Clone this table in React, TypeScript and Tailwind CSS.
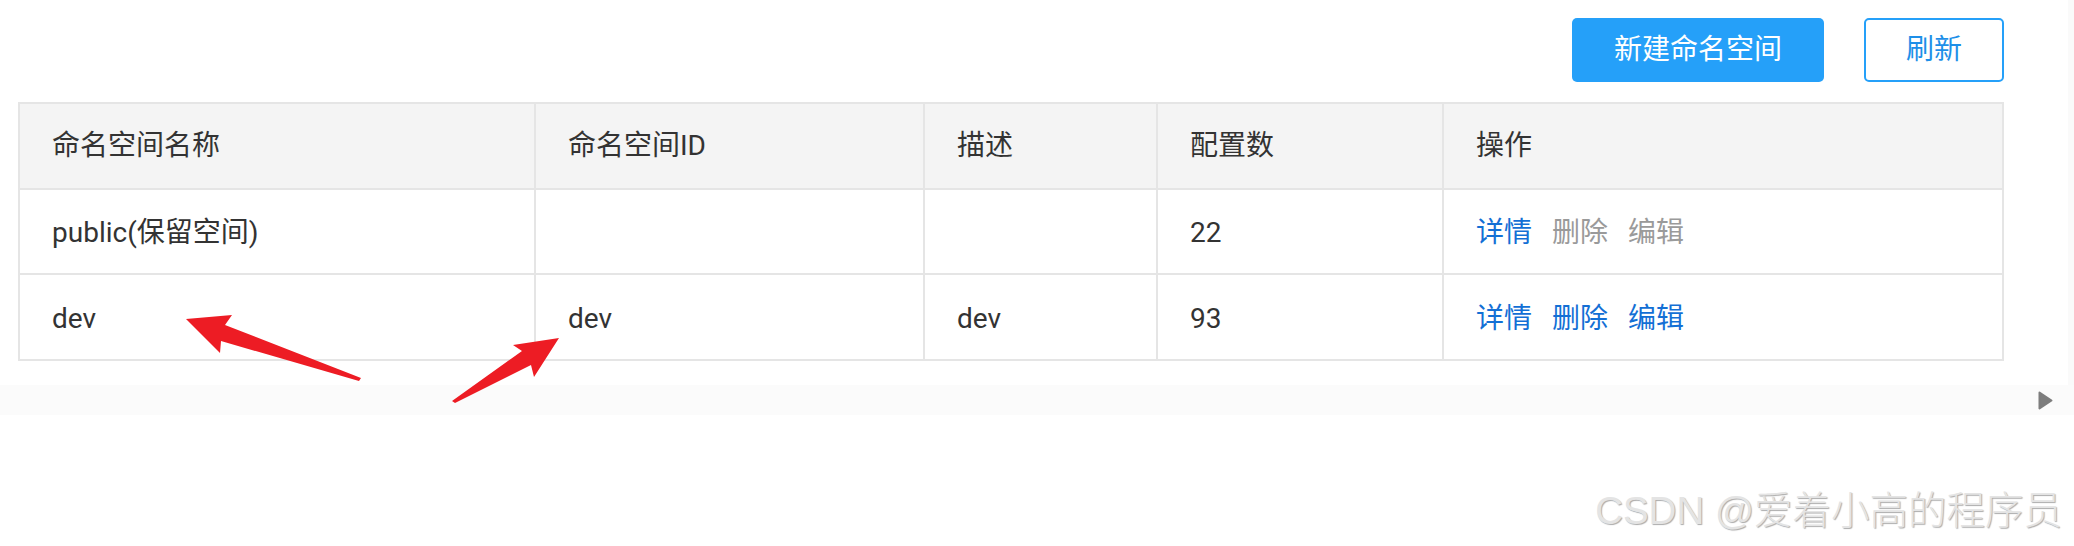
const rows = [
  { name: 'public(保留空间)', id: '', desc: '', count: '22', locked: true },
  { name: 'dev', id: 'dev', desc: 'dev', count: '93', locked: false },
];

const cols = 'grid grid-cols-[514px_389px_233px_286px_560px]';
const cell = 'flex items-center pl-[32px] border-[#e5e5e5]';
const bodyCell = `${cell} pt-[3px]`;

export default function App() {
  return (
    <div className="relative h-[546px] w-full overflow-hidden bg-white font-['Roboto','Noto_Sans_CJK_SC',sans-serif] text-[28px] text-[#333]">
      <div className="flex h-[385px]">
        <div className="flex-1 pl-[18px] pr-[64px]">
          {/* toolbar */}
          <div className="flex justify-end gap-[40px] pt-[18px]">
            <button className="h-[64px] w-[252px] rounded-[5px] bg-[#25a0f9] text-white">新建命名空间</button>
            <button className="h-[64px] w-[140px] rounded-[5px] border-2 border-[#25a0f9] bg-white text-[#1d8fe8]">刷新</button>
          </div>

          {/* namespace table */}
          <div className="mt-[20px] border-2 border-[#e5e5e5]">
            <div className={`${cols} h-[84px] bg-[#f4f4f4]`}>
              <div className={cell}>命名空间名称</div>
              <div className={`${cell} border-l-2`}>命名空间ID</div>
              <div className={`${cell} border-l-2`}>描述</div>
              <div className={`${cell} border-l-2`}>配置数</div>
              <div className={`${cell} border-l-2`}>操作</div>
            </div>
            {rows.map((r, i) => (
              <div
                key={r.name}
                className={`${cols} border-t-2 border-[#e5e5e5] ${i === 0 ? 'h-[85px]' : 'h-[86px]'}`}
              >
                <div className={bodyCell}>{r.name}</div>
                <div className={`${bodyCell} border-l-2`}>{r.id}</div>
                <div className={`${bodyCell} border-l-2`}>{r.desc}</div>
                <div className={`${bodyCell} border-l-2`}>{r.count}</div>
                <div className={`${bodyCell} border-l-2 gap-[20px]`}>
                  <span className="text-[#136fd5]">详情</span>
                  <span className={r.locked ? 'text-[#9a9a9a]' : 'text-[#136fd5]'}>删除</span>
                  <span className={r.locked ? 'text-[#9a9a9a]' : 'text-[#136fd5]'}>编辑</span>
                </div>
              </div>
            ))}
          </div>
        </div>
        <div className="w-[6px] bg-[#fafafa]" />
      </div>

      {/* horizontal scroll track */}
      <div className="flex h-[30px] items-center justify-end bg-[#fbfbfb] pr-[21px]">
        <svg width="15" height="19" viewBox="0 0 15 19">
          <path d="M1.5 1.5 L13.5 9.5 L1.5 17.5 Z" fill="#7d7d7d" stroke="#7d7d7d" strokeWidth="2" strokeLinejoin="round" />
        </svg>
      </div>

      {/* annotation arrows */}
      <svg className="pointer-events-none absolute left-0 top-0" width="2074" height="546">
        <polygon
          points="186,319 232,315 225,325 361,378 359,381 221,341 220,353"
          fill="#ed1c24"
        />
        <polygon
          points="559,338 513,345 522,351 452,401 455,403 531,365 534,377"
          fill="#ed1c24"
        />
      </svg>

      {/* watermark */}
      <div className="absolute right-[12px] top-[489px] font-['Liberation_Sans','Noto_Sans_CJK_SC',sans-serif] text-[38.5px] font-light leading-[44px] text-[#e4e4e4] [text-shadow:1px_1px_1px_#ababab]">
        CSDN @爱着小高的程序员
      </div>
    </div>
  );
}
